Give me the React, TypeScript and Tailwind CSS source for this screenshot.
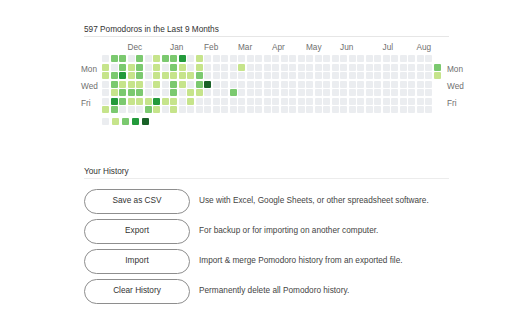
import React from "react";

const LEVELS = ["bg-[#ebedf0]", "bg-[#c6e48b]", "bg-[#7bc96f]", "bg-[#239a3b]", "bg-[#196127]"];

// first 13 weeks of activity, by weekday row (Sun..Sat)
const EARLY: number[][] = [
  [0, 2, 2, 0, 2, 0, 1, 2, 2, 3, 0, 1, 0],
  [1, 0, 2, 1, 2, 0, 1, 0, 2, 1, 0, 1, 0],
  [1, 2, 3, 1, 2, 0, 1, 1, 1, 1, 1, 2, 0],
  [0, 2, 1, 1, 1, 0, 1, 0, 2, 1, 0, 2, 4],
  [0, 1, 2, 2, 2, 0, 0, 0, 2, 0, 1, 1, 0],
  [0, 3, 2, 1, 1, 1, 3, 1, 1, 0, 1, 0, 0],
  [1, 2, 0, 0, 0, 2, 1, 0, 1, 0, 0, 0, 0],
];

const WEEKS = 40;

function level(week: number, day: number): number | null {
  if (week === WEEKS - 1) {
    if (day === 1) return 2;
    if (day === 2) return 1;
    return null;
  }
  if (week < 13) return EARLY[day][week];
  if (week === 16 && day === 1) return 1;
  if (week === 15 && day === 4) return 2;
  return 0;
}

const MONTHS: [string, number][] = [
  ["Dec", 3],
  ["Jan", 8],
  ["Feb", 12],
  ["Mar", 16],
  ["Apr", 20],
  ["May", 24],
  ["Jun", 28],
  ["Jul", 33],
  ["Aug", 37],
];

function DayLabels() {
  return (
    <div className="flex flex-col pt-[6px] text-[#6f6f6f] whitespace-nowrap">
      <div className="h-[17px] leading-[17px]">Mon</div>
      <div className="h-[17px] leading-[17px]">Wed</div>
      <div className="h-[17px] leading-[17px]">Fri</div>
    </div>
  );
}

function Heatmap() {
  const cells = [];
  for (let w = 0; w < WEEKS; w++) {
    for (let d = 0; d < 7; d++) {
      const l = level(w, d);
      cells.push(
        <div
          key={`${w}-${d}`}
          className={l === null ? "w-[7px] h-[7px]" : `w-[7px] h-[7px] rounded-[1px] ${LEVELS[l]}`}
        />
      );
    }
  }

  return (
    <div className="ml-[-3px] mt-[6px]">
      <div className="ml-[21px] grid grid-cols-[repeat(40,7px)] gap-x-[1.5px] h-[10px] leading-[10px] text-[#6f6f6f]">
        {MONTHS.map(([m, col]) => (
          <div key={m} className="whitespace-nowrap" style={{ gridColumnStart: col + 1 }}>
            {m}
          </div>
        ))}
      </div>
      <div className="flex mt-[2px]">
        <div className="w-[21px] shrink-0">
          <DayLabels />
        </div>
        <div className="shrink-0 grid grid-flow-col grid-rows-[repeat(7,7px)] auto-cols-[7px] gap-[1.5px]">{cells}</div>
        <div className="ml-[6.5px] shrink-0">
          <DayLabels />
        </div>
      </div>
      <div className="ml-[21px] mt-[5px] flex gap-[3px]">
        {LEVELS.map((c) => (
          <div key={c} className={`w-[7px] h-[7px] rounded-[1px] ${c}`} />
        ))}
      </div>
    </div>
  );
}

const ACTIONS: [string, string][] = [
  ["Save as CSV", "Use with Excel, Google Sheets, or other spreadsheet software."],
  ["Export", "For backup or for importing on another computer."],
  ["Import", "Import & merge Pomodoro history from an exported file."],
  ["Clear History", "Permanently delete all Pomodoro history."],
];

export default function App() {
  return (
    <div className="w-[512px] h-[320px] bg-white font-['Liberation_Sans',Arial,sans-serif] text-[8.25px] text-[#333]">
      <div className="ml-[84px] w-[365px] pt-[24px]">
        <div className="h-[13px] leading-[11px] border-b border-[#e6e6e6]">597 Pomodoros in the Last 9 Months</div>
        <Heatmap />

        <div className="mt-[41px] h-[13px] leading-[11px] border-b border-[#ececec]">Your History</div>
        <div className="mt-[10px] flex flex-col gap-[5px]">
          {ACTIONS.map(([label, desc]) => (
            <div key={label} className="flex items-center gap-[9px]">
              <button className="w-[106px] h-[25px] rounded-full border border-[#8e8e8e] bg-white text-[#333] text-[8.25px] leading-none">
                {label}
              </button>
              <span className="text-[#444]">{desc}</span>
            </div>
          ))}
        </div>
      </div>
    </div>
  );
}
